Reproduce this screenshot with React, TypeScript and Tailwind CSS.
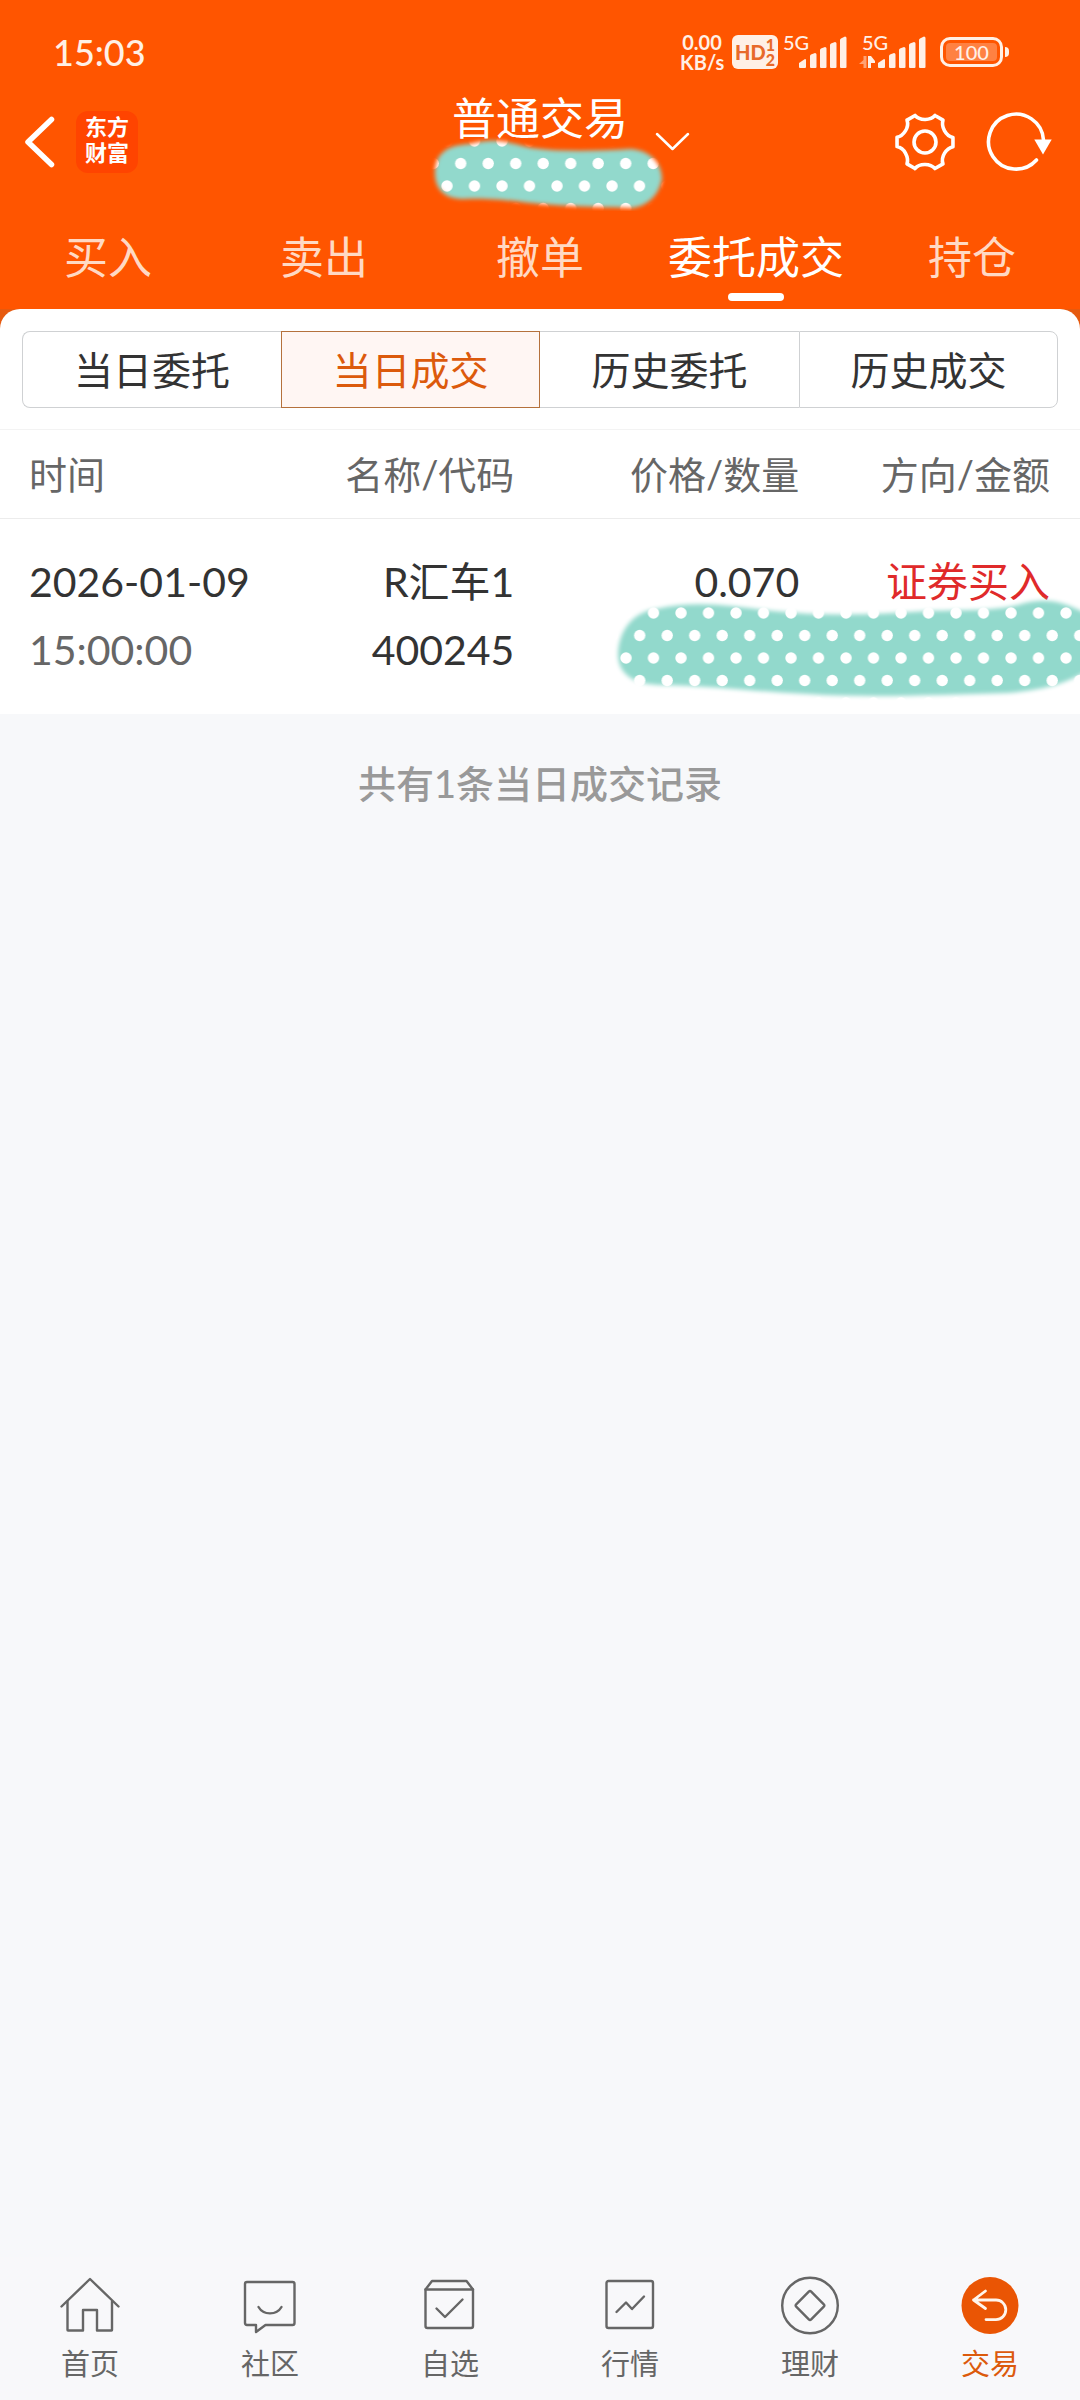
import type { ReactNode } from "react";

const tabs = ["买入", "卖出", "撤单", "委托成交", "持仓"];
const segments = ["当日委托", "当日成交", "历史委托", "历史成交"];

function SignalBars() {
  return (
    <svg width="48" height="32" viewBox="0 0 48 32" fill="#fff0e6" aria-hidden="true">
      <path d="M0 31v-4l6-4q1 0 1 1v7q0 1-1 1H1q-1 0-1-1Z" />
      <path d="M11 31V20q0-1 1-1.500l4-1.500q1.500 0 1.500 1.500V31q0 1-1 1h-4.500q-1 0-1-1Z" />
      <path d="M21 31V14q0-1 1-1.500l4-1.500q1.500 0 1.500 1.500V31q0 1-1 1h-4.500q-1 0-1-1Z" />
      <path d="M31 31V9q0-1 1-1.500l4-1.500q1.500 0 1.500 1.500V31q0 1-1 1h-4.500q-1 0-1-1Z" />
      <path d="M41 31V4q0-1 1-1.500l4-2q1.500 0 1.500 1.500V31q0 1-1 1h-4.500q-1 0-1-1Z" />
    </svg>
  );
}

function StatusBar() {
  return (
    <div className="flex h-[88px] items-center justify-between pt-4 pr-[71px] pl-[53px] text-[#fff0e6]">
      <span className="text-[36px] leading-10 font-medium">15:03</span>
      <div className="flex h-9 items-center">
        <div className="flex w-[44px] flex-col text-center text-[20px] leading-[20px] font-bold">
          <span>0.00</span>
          <span>KB/s</span>
        </div>
        <div className="ml-2 flex h-[34px] w-[46px] items-center justify-center rounded-md bg-[#fff0e6] text-[#e8692a]">
          <span className="text-[20px] leading-6 font-black">HD</span>
          <span className="flex flex-col text-[16px] leading-[15px] font-black">
            <span>1</span>
            <span>2</span>
          </span>
        </div>
        <div className="relative ml-[21px]">
          <span className="absolute -top-1 -left-4 text-[20px] leading-5 font-medium">5G</span>
          <SignalBars />
        </div>
        <div className="relative ml-[31px]">
          <span className="absolute -top-1 -left-4 text-[20px] leading-5 font-medium">5G</span>
          <svg className="absolute bottom-0 -left-[19px]" width="16" height="12" viewBox="0 0 16 12" aria-hidden="true">
            <path d="M4.500 0h3v12h-3V8H0l4.500-4Z" fill="#fff0e6" opacity=".5" />
            <path d="M9 0h3l4 5v2h-4v5H9Z" fill="#fff0e6" />
          </svg>
          <SignalBars />
        </div>
        <div className="ml-[14px] flex items-center gap-[2px]">
          <div className="flex h-[30px] w-[63px] rounded-[10px] border-[3px] border-[#fff0e6] p-[3px]">
            <span className="flex flex-1 items-center justify-center rounded-[4px] bg-[#ff8142] text-[20px] leading-5 font-medium">
              100
            </span>
          </div>
          <div className="h-[10px] w-1 rounded-r-sm bg-[#fff0e6]" />
        </div>
      </div>
    </div>
  );
}

function rotated(x: number, y: number, deg: number) {
  const a = (deg * Math.PI) / 180;
  const dx = x - 30;
  const dy = y - 30;
  return `${(30 + dx * Math.cos(a) - dy * Math.sin(a)).toFixed(2)} ${(30 + dx * Math.sin(a) + dy * Math.cos(a)).toFixed(2)}`;
}

const gearPath =
  [0, 60, 120, 180, 240, 300]
    .map(
      (d, i) =>
        `${i === 0 ? "M" : "L"}${rotated(40, 3.5, d)}L${rotated(48, 8.1, d)}C${rotated(46, 14.5, d)} ${rotated(50.5, 24, d)} ${rotated(58, 25.4, d)}`
    )
    .join("") + "Z";

function GearIcon() {
  return (
    <svg width="62" height="60" viewBox="-1 0 62 60" fill="none" stroke="#fff" strokeWidth="3.6" strokeLinejoin="round" aria-hidden="true">
      <path d={gearPath} />
      <circle cx="30" cy="30" r="11" />
    </svg>
  );
}

function RefreshIcon() {
  return (
    <svg width="66" height="60" viewBox="0 0 66 60" fill="none" aria-hidden="true">
      <path d="M57.500 28A27.500 27.500 0 1 0 50.500 48" stroke="#fff" strokeWidth="3.6" strokeLinecap="round" />
      <path d="M48.300 27.500h17.400L57 42.500Z" fill="#fff" />
    </svg>
  );
}

/* Brush stroke in mint with a staggered dot pattern; covers private figures. */
function DottedBrush({
  id,
  width,
  height,
  shape,
  x,
  y,
}: {
  id: string;
  width: number;
  height: number;
  shape: string;
  x: number;
  y: number;
}) {
  return (
    <svg width={width} height={height} viewBox={`0 0 ${width} ${height}`} className="block" aria-hidden="true">
      <defs>
        <pattern id={`${id}-dots`} x={x} y={y} width="27.5" height="45" patternUnits="userSpaceOnUse">
          <rect width="27.5" height="45" fill="#92d9cc" />
          <circle cx="7" cy="11" r="5.7" fill="#fff" />
          <circle cx="20.7" cy="33.5" r="5.7" fill="#fff" />
        </pattern>
        <filter id={`${id}-soft`} x="-10%" y="-20%" width="120%" height="140%">
          <feGaussianBlur stdDeviation="2" />
        </filter>
        <mask id={`${id}-mask`} maskUnits="userSpaceOnUse" x="0" y="0" width={width} height={height}>
          <path d={shape} fill="#fff" filter={`url(#${id}-soft)`} />
        </mask>
      </defs>
      <rect width={width} height={height} fill={`url(#${id}-dots)`} mask={`url(#${id}-mask)`} />
    </svg>
  );
}

function TitleBar() {
  return (
    <div className="grid h-[108px] grid-cols-[1fr_229px_1fr]">
      <div className="flex items-center pl-6">
        <button type="button" aria-label="返回">
          <svg width="32" height="54" viewBox="0 0 32 54" fill="none" stroke="#fff" strokeWidth="5.5" strokeLinecap="round" strokeLinejoin="round" aria-hidden="true">
            <path d="M27.500 4.500 4 27l23.500 22.500" />
          </svg>
        </button>
        <div className="ml-5 flex size-[62px] flex-col items-center justify-center rounded-xl bg-[#ff4400] pb-1 text-[22px] leading-[26px] font-bold text-white">
          <span>东方</span>
          <span>财富</span>
        </div>
      </div>
      <div className="relative text-center text-white">
        <h1 className="text-[44px] leading-[60px]">普通交易</h1>
        <div className="absolute top-[45px] -left-1">
          <DottedBrush
            id="account"
            width={248}
            height={78}
            x={18}
            y={-3}
            shape="M13 40C13 18 28 12 48 11C75 4 88 10 110 15C140 19 175 18 208 16C228 17 240 30 240 46C237 62 226 73 210 75C180 74 130 73 100 69C75 66 60 65 42 66C22 66 13 56 13 40Z"
          />
        </div>
      </div>
      <div className="flex items-center justify-between pr-7">
        <button type="button" aria-label="切换账户">
          <svg width="36" height="22" viewBox="0 0 36 22" fill="none" stroke="#fff" strokeWidth="2.500" strokeLinecap="round" strokeLinejoin="round" aria-hidden="true">
            <path d="M2 3 17.500 18 33 3" />
          </svg>
        </button>
        <div className="flex items-center gap-[30px]">
          <button type="button" aria-label="设置">
            <GearIcon />
          </button>
          <button type="button" aria-label="刷新">
            <RefreshIcon />
          </button>
        </div>
      </div>
    </div>
  );
}

function Tabs() {
  return (
    <nav className="grid h-[113px] grid-cols-5" aria-label="交易功能">
      {tabs.map((label) => {
        const active = label === "委托成交";
        return (
          <button
            key={label}
            type="button"
            className={
              active
                ? "flex flex-col items-center justify-end pb-2 text-[44px] leading-[60px] text-white"
                : "flex flex-col items-center justify-end pb-2 text-[44px] leading-[60px] text-[#ffd9c4]"
            }
          >
            <span className="whitespace-nowrap">{label}</span>
            <span className={active ? "mt-1.5 h-2 w-14 rounded-full bg-white" : "mt-1.5 h-2 w-14"} />
          </button>
        );
      })}
    </nav>
  );
}

function Segments() {
  return (
    <div className="grid grid-cols-4 px-[22px] pt-[22px] pb-[21px]">
      {segments.map((label, i) => (
        <button
          key={label}
          type="button"
          className={
            i === 1
              ? "h-[77px] border border-[#b5713c] bg-[#fff6f3] text-[39px] leading-[52px] text-[#dc5a0c]"
              : i === 0
                ? "h-[77px] rounded-l-lg border border-r-0 border-[#cfd1d3] text-[39px] leading-[52px] text-[#333]"
                : i === 2
                  ? "h-[77px] border-y border-[#cfd1d3] text-[39px] leading-[52px] text-[#333]"
                  : "h-[77px] rounded-r-lg border border-[#cfd1d3] text-[39px] leading-[52px] text-[#333]"
          }
        >
          {label}
        </button>
      ))}
    </div>
  );
}

function Trades() {
  return (
    <div className="relative overflow-hidden border-t border-[#f3f3f3]">
      <table className="w-full table-fixed text-right">
        <thead>
          <tr className="h-[88px] border-b border-[#ececec] text-[38px] leading-[52px] whitespace-nowrap text-[#666]">
            <th scope="col" className="w-[24%] pl-[29px] text-left font-normal">时间</th>
            <th scope="col" className="w-[24%] pr-1 font-normal">名称/代码</th>
            <th scope="col" className="w-[26%] font-normal">价格/数量</th>
            <th scope="col" className="pr-[30px] font-normal">方向/金额</th>
          </tr>
        </thead>
        <tbody>
          <tr className="align-top text-[41px] leading-[68px] whitespace-nowrap text-[#333]">
            <td className="pt-[29px] pb-[30px] pl-[29px] text-left">
              <div>2026-01-09</div>
              <div className="text-[#666]">15:00:00</div>
            </td>
            <td className="pt-[29px] pr-1 pb-[30px]">
              <div>R汇车1</div>
              <div>400245</div>
            </td>
            <td className="pt-[29px] pb-[30px]">0.070</td>
            <td className="pt-[29px] pr-[30px] pb-[30px] text-[#e02a2a]">证券买入</td>
          </tr>
        </tbody>
      </table>
      <div className="absolute right-0 bottom-3">
        <DottedBrush
          id="amount"
          width={472}
          height={110}
          x={11}
          y={10}
          shape="M10 62C11 38 25 20 48 17C90 8 120 14 165 19C220 25 270 22 320 19C360 18 385 19 410 13C440 4 458 10 490 28V72C460 92 440 97 400 101C330 103 260 106 200 102C140 99 100 94 60 93C28 94 10 84 10 62Z"
        />
      </div>
    </div>
  );
}

function NavIcon({ children }: { children: ReactNode }) {
  return (
    <svg width="60" height="60" viewBox="0 0 60 60" fill="none" stroke="#666" strokeWidth="2.400" strokeLinecap="round" strokeLinejoin="round" aria-hidden="true">
      {children}
    </svg>
  );
}

const navItems: { label: string; icon: ReactNode }[] = [
  {
    label: "首页",
    icon: (
      <>
        <path d="M1.500 30.500 30 3l28.500 27.500" />
        <path d="M7.500 25.500v28.500q0 .5.5.5h15V34h14v20.500h14.500q.5 0 .5-.5V25.500" />
      </>
    ),
  },
  {
    label: "社区",
    icon: (
      <>
        <path d="M7 6h45.500q2 0 2 2v39q0 2-2 2H25.500L16 56v-7H7q-2 0-2-2V8q0-2 2-2Z" />
        <path d="M18.500 31c5 8.500 18 8.500 23 0" />
      </>
    ),
  },
  {
    label: "自选",
    icon: (
      <>
        <path d="M5.500 13.500 12 5h34.500l6.500 8.500V50q0 2-2 2H7.500q-2 0-2-2Z" />
        <path d="M5.500 13.500H53M16.500 32.500l8.500 8.500 17.500-17.500" />
      </>
    ),
  },
  {
    label: "行情",
    icon: (
      <>
        <rect x="6.500" y="5" width="46.500" height="47" rx="2" />
        <path d="m16.500 36 9.500-9.500 6 6.500 12-12.500" />
      </>
    ),
  },
  {
    label: "理财",
    icon: (
      <>
        <circle cx="30" cy="29.500" r="27.800" />
        <path d="M28.800 15.700q1.200-1.200 2.400 0l12.600 12.600q1.200 1.200 0 2.400L31.200 43.300q-1.200 1.200-2.400 0L16.200 30.700q-1.200-1.200 0-2.400Z" />
      </>
    ),
  },
  {
    label: "交易",
    icon: (
      <>
        <circle cx="30" cy="29.500" r="28.500" fill="#ea5504" stroke="none" />
        <path d="M25.500 15 13.500 24l12 8.500M13.500 24H36a9.800 9.800 0 0 1 0 19.600H26" stroke="#fff5ec" strokeWidth="2.800" />
      </>
    ),
  },
];

function BottomNav() {
  return (
    <nav className="grid grid-cols-6 bg-[#f8f8fa] pt-[19px] pb-[15px]" aria-label="主导航">
      {navItems.map(({ label, icon }) => (
        <a
          key={label}
          href="#"
          className={
            label === "交易"
              ? "flex flex-col items-center gap-[7px] text-[29px] leading-[42px] text-[#dc5a0c]"
              : "flex flex-col items-center gap-[7px] text-[29px] leading-[42px] text-[#666]"
          }
        >
          <NavIcon>{icon}</NavIcon>
          {label}
        </a>
      ))}
    </nav>
  );
}

export default function App() {
  return (
    <div className="flex min-h-screen flex-col bg-[#f7f8fa] font-[Lato,'Noto_Sans_CJK_SC',sans-serif]">
      <header className="bg-[#ff5500]">
        <StatusBar />
        <TitleBar />
        <Tabs />
      </header>
      <main className="flex-1">
        <div className="bg-[#e65a0f]">
          <section className="rounded-t-[20px] bg-white">
            <Segments />
            <Trades />
          </section>
        </div>
        <p className="pt-[43px] text-center text-[38px] leading-[52px] font-medium text-[#999]">
          共有1条当日成交记录
        </p>
      </main>
      <BottomNav />
    </div>
  );
}
